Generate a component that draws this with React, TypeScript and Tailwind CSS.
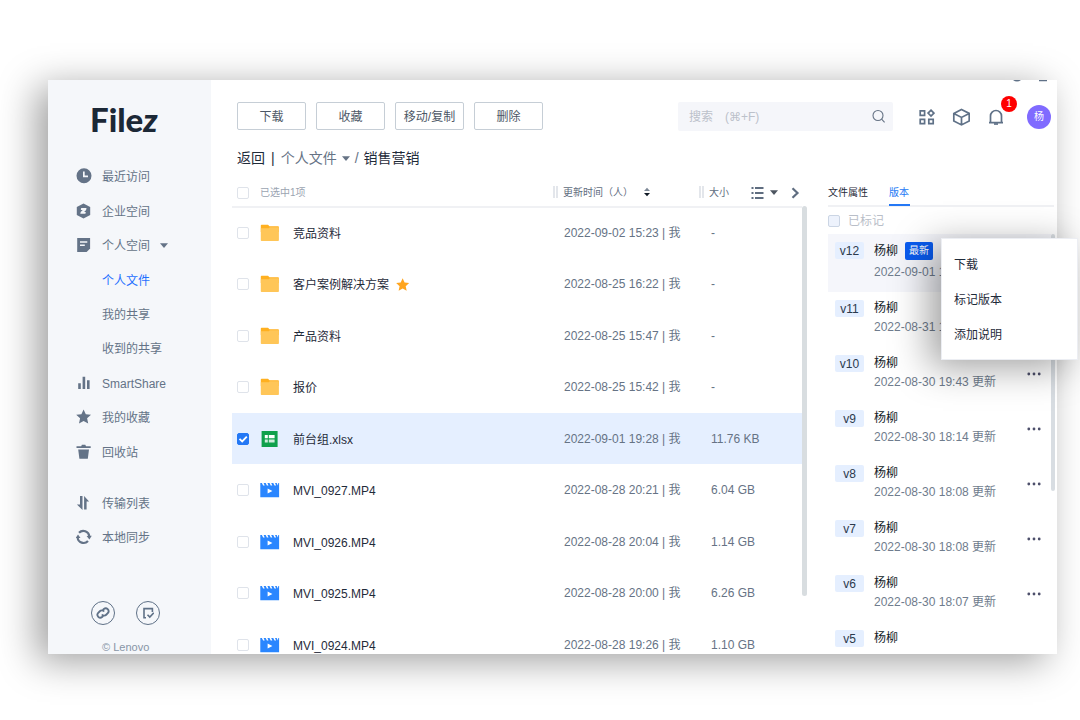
import { clsx } from "clsx";
import type { ReactNode } from "react";

type FileKind = "folder" | "sheet" | "video";

type FileItem = {
  kind: FileKind;
  name: string;
  selected?: boolean;
  size: string;
  starred?: boolean;
  updatedAt: string;
};

type Version = {
  id: string;
  updatedAt?: string;
};

const files: FileItem[] = [
  { kind: "folder", name: "竞品资料", updatedAt: "2022-09-02 15:23", size: "-" },
  { kind: "folder", name: "客户案例解决方案", updatedAt: "2022-08-25 16:22", size: "-", starred: true },
  { kind: "folder", name: "产品资料", updatedAt: "2022-08-25 15:47", size: "-" },
  { kind: "folder", name: "报价", updatedAt: "2022-08-25 15:42", size: "-" },
  { kind: "sheet", name: "前台组.xlsx", updatedAt: "2022-09-01 19:28", size: "11.76 KB", selected: true },
  { kind: "video", name: "MVI_0927.MP4", updatedAt: "2022-08-28 20:21", size: "6.04 GB" },
  { kind: "video", name: "MVI_0926.MP4", updatedAt: "2022-08-28 20:04", size: "1.14 GB" },
  { kind: "video", name: "MVI_0925.MP4", updatedAt: "2022-08-28 20:00", size: "6.26 GB" },
  { kind: "video", name: "MVI_0924.MP4", updatedAt: "2022-08-28 19:26", size: "1.10 GB" },
];

const versions: Version[] = [
  { id: "v12", updatedAt: "2022-09-01 19:28" },
  { id: "v11", updatedAt: "2022-08-31 19:43" },
  { id: "v10", updatedAt: "2022-08-30 19:43" },
  { id: "v9", updatedAt: "2022-08-30 18:14" },
  { id: "v8", updatedAt: "2022-08-30 18:08" },
  { id: "v7", updatedAt: "2022-08-30 18:08" },
  { id: "v6", updatedAt: "2022-08-30 18:07" },
  { id: "v5" },
];

function Icon({ children, className }: { children: ReactNode; className?: string }) {
  return (
    <svg viewBox="0 0 16 16" fill="currentColor" aria-hidden="true" className={clsx("shrink-0", className ?? "size-4")}>
      {children}
    </svg>
  );
}

function Caret({ className }: { className?: string }) {
  return (
    <svg viewBox="0 0 8 5" fill="currentColor" aria-hidden="true" className={clsx("h-[5px] w-2 shrink-0", className)}>
      <path d="M0 .3h8L4 4.900z" />
    </svg>
  );
}

const clockIcon = (
  <Icon>
    <path fillRule="evenodd" d="M8 .3a7.5 7.5 0 1 0 0 15 7.5 7.5 0 0 0 0-15ZM7 3.5h1.7v4H12v1.7H7z" />
  </Icon>
);

const companyIcon = (
  <Icon>
    <path d="m7.5.4 6.7 3.7v7.8l-6.7 3.7L.8 11.9V4.1z" />
    <path d="M5.200 5h5.300l-.4 1.900-2 2h1.700l-.4 1.900H4.300l.4-1.900 2-2H4.800z" fill="#f5f7fa" />
  </Icon>
);

const personalIcon = (
  <Icon>
    <path d="M1.200 1h12.900v10.500L10.600 14.900H1.200z" />
    <path d="M4 4.200h7.300v1.500H4zM4 7.400h4.800v1.500H4z" fill="#f5f7fa" />
  </Icon>
);

const shareIcon = (
  <Icon>
    <path d="M2.200 8.300h2.600V14H2.200zM6.600 1.800h2.600V14H6.600zM11 5.200h2.600V14H11z" />
  </Icon>
);

const starPath = "m7.6.4 2.200 4.800 5.200.6-3.900 3.500 1.100 5.200-4.600-2.600-4.600 2.600L4.100 9.300.2 5.800l5.200-.6z";

const trashIcon = (
  <Icon>
    <path d="M.5 2.200h4.700L5.900.8h3.400l.7 1.400h4.700v1.900H.5zM2.200 5.400h10.800l-1.200 9.400H3.400z" />
  </Icon>
);

const transferIcon = (
  <Icon>
    <path d="M4 1h2.500v14L.9 9.500H4zM8.100 1l5 5.500h-2.500V14.500H8.100z" />
  </Icon>
);

const syncIcon = (
  <Icon>
    <g fill="none" stroke="currentColor" strokeWidth="2.200">
      <path d="M3 3.700a6 6 0 0 1 10.300 3.600" />
      <path d="M12 12a6 6 0 0 1-10.400-3.500" />
    </g>
    <path d="m10.600 7 5.200-.3-2.400 3.800zM4.500 8.900l-4.800.2 2.300-3.700z" />
  </Icon>
);

type NavEntry = { active?: boolean; expandable?: boolean; icon?: ReactNode; label: string };

const primaryNav: NavEntry[] = [
  { label: "最近访问", icon: clockIcon },
  { label: "企业空间", icon: companyIcon },
  { label: "个人空间", icon: personalIcon, expandable: true },
  { label: "个人文件", active: true },
  { label: "我的共享" },
  { label: "收到的共享" },
  { label: "SmartShare", icon: shareIcon },
  { label: "我的收藏", icon: <Icon><path d={starPath} /></Icon> },
  { label: "回收站", icon: trashIcon },
];

const secondaryNav: NavEntry[] = [
  { label: "传输列表", icon: transferIcon },
  { label: "本地同步", icon: syncIcon },
];

function NavLink({ active, expandable, icon, label }: NavEntry) {
  return (
    <a
      href="#"
      className={clsx("flex items-center gap-2.5", active ? "text-[#1f6fff]" : "text-[#647387]")}
    >
      {icon ?? <span className="w-4" />}
      <span className="pt-0.5">{label}</span>
      {expandable ? <Caret /> : null}
    </a>
  );
}

function Sidebar() {
  return (
    <aside className="flex w-[163px] shrink-0 flex-col overflow-hidden bg-[#f5f7fa]">
      <div className="mt-[19px] ml-[42px] h-10 font-['Lato',sans-serif] text-[33px] leading-10 font-black text-[#1c2836]">
        File<span className="italic">z</span>
      </div>
      <nav className="mt-5 pl-7">
        <div className="grid h-[310px] auto-rows-fr">
          {primaryNav.map((entry) => (
            <NavLink key={entry.label} {...entry} />
          ))}
        </div>
        <div className="mt-[17px] grid h-[68px] auto-rows-fr">
          {secondaryNav.map((entry) => (
            <NavLink key={entry.label} {...entry} />
          ))}
        </div>
      </nav>
      <div className="mt-[47px] ml-[43px] flex gap-[21px] text-[#5f7187]">
        <button type="button" aria-label="链接" className="grid size-6 place-items-center rounded-full border border-current">
          <svg viewBox="0 0 24 24" fill="none" stroke="currentColor" strokeWidth="3.200" className="size-3.5">
            <path d="M10 14.500a5 5 0 0 0 7.500.5l3-3a5 5 0 0 0-7-7l-2 2" />
            <path d="M14 9.500a5 5 0 0 0-7.500-.5l-3 3a5 5 0 0 0 7 7l2-2" />
          </svg>
        </button>
        <button type="button" aria-label="任务" className="grid size-6 place-items-center rounded-full border border-current">
          <svg viewBox="0 0 12 12" fill="none" stroke="currentColor" strokeWidth="1.600" className="size-3">
            <path d="M4 10.800H2V1.600h8.400V5" />
            <path d="m5.500 7.700 2.300 2.400 4-4.200" />
          </svg>
        </button>
      </div>
      <p className="mt-3.5 ml-[54px] text-[11px] leading-4 whitespace-nowrap text-[#8795a6]">© Lenovo</p>
    </aside>
  );
}

function Checkbox({ checked, label, muted }: { checked?: boolean; label: string; muted?: boolean }) {
  return (
    <span className="relative block size-3 shrink-0">
      <input
        type="checkbox"
        aria-label={label}
        defaultChecked={checked}
        className={clsx(
          "peer block size-3 appearance-none rounded-[2px] border checked:border-[#2478f5] checked:bg-[#2478f5]",
          muted ? "border-[#cbd5e4] bg-[#edf2fc]" : "border-[#dfe3ea] bg-white",
        )}
      />
      <svg
        viewBox="0 0 12 12"
        fill="none"
        stroke="white"
        strokeWidth="1.800"
        className="pointer-events-none absolute inset-0 hidden size-3 peer-checked:block"
      >
        <path d="m2.500 5.800 2.700 2.600 4.600-4.800" />
      </svg>
    </span>
  );
}

function FileIcon({ kind }: { kind: FileKind }) {
  if (kind === "folder") {
    return (
      <svg viewBox="0 0 20 18" className="h-[18px] w-5 shrink-0" aria-hidden="true">
        <path d="M.8 1.500a.8.8 0 0 1 .8-.8h6.400L9.500 2.300h8.600a.8.800 0 0 1 .8.8V8H.8z" fill="#ffb020" />
        <path d="M.8 4.200h8l1-1h9.100v13a.8.800 0 0 1-.8.8H1.600a.8.800 0 0 1-.8-.8z" fill="#ffc658" />
      </svg>
    );
  }
  if (kind === "sheet") {
    return (
      <svg viewBox="0 0 20 18" className="h-[18px] w-5 shrink-0" aria-hidden="true">
        <path d="M1.600 1h16v16h-16z" fill="#0fa04c" />
        <path d="M4.800 5h3v3.200h-3zM8.800 5h5.800v3.200H8.800z" fill="#fff" />
        <path d="M4.800 9.400h3v3.200h-3zM8.800 9.400h5.800v3.200H8.800z" fill="#cfecdb" />
      </svg>
    );
  }
  return (
    <svg viewBox="0 0 20 18" className="h-[18px] w-5 shrink-0" aria-hidden="true">
      <path
        d="M.3 2h1.600l1.200 2.400h1.600L3.600 2h2.100l1.200 2.400h1.600L7.400 2h2.100l1.200 2.400h1.600L11.200 2h2.100l1.200 2.400h1.600L15 2h1.700l1.200 2.400.4-2.400h.8v14.200H.3z"
        fill="#2a86ff"
      />
      <path d="m7.600 7.400 4.800 2.600-4.800 2.600z" fill="#fff" />
    </svg>
  );
}

function ToolbarButton({ children }: { children: ReactNode }) {
  return (
    <button
      type="button"
      className="h-7 w-[69px] rounded-[2px] border border-[#c6ced6] bg-white pt-0.5 text-xs text-[#4d5766]"
    >
      {children}
    </button>
  );
}

function Header() {
  return (
    <header className="flex h-[29px] items-center pr-1.5 pl-[26px]">
      <div className="flex gap-2.5 self-start">
        <ToolbarButton>下载</ToolbarButton>
        <ToolbarButton>收藏</ToolbarButton>
        <ToolbarButton>移动/复制</ToolbarButton>
        <ToolbarButton>删除</ToolbarButton>
      </div>
      <label className="ml-auto flex h-[29px] w-[215px] items-center rounded-[2px] bg-[#f5f6fa] pr-1.5 pl-[11px]">
        <input
          type="text"
          aria-label="搜索"
          placeholder="搜索　(⌘+F)"
          className="min-w-0 flex-1 bg-transparent font-['Liberation_Sans','DejaVu_Sans','Noto_Sans_CJK_SC',sans-serif] text-xs outline-none placeholder:text-[#bcc1ca]"
        />
        <Icon className="size-4 text-[#667385]">
          <g fill="none" stroke="currentColor" strokeWidth="1.100">
            <circle cx="7" cy="6.500" r="5" />
            <path d="m10.600 10.100 3 3.200" />
          </g>
        </Icon>
      </label>
      <div className="ml-[26px] flex items-center gap-[17px] text-[#5f7187]">
        <button type="button" aria-label="应用">
          <Icon>
            <g fill="none" stroke="currentColor" strokeWidth="1.700">
              <path d="M1.200 1.900h4.400v4.400H1.200zM1.200 10.300h4.400v4.400H1.200zM9.800 10.300h4.400v4.400H9.800zM12 1.200l2.900 2.900L12 7 9.100 4.100z" />
            </g>
          </Icon>
        </button>
        <button type="button" aria-label="产品">
          <svg viewBox="0 0 18 18" fill="none" stroke="currentColor" strokeWidth="1.700" className="size-[18px]">
            <path d="m9.500 1.500 7.700 3.900v7.600l-7.700 3.900L1.800 13V5.400zM1.800 5.400l7.700 4 7.700-4M9.500 9.400v7.500" />
          </svg>
        </button>
        <button type="button" aria-label="通知" className="relative">
          <svg viewBox="0 0 18 18" fill="none" stroke="currentColor" strokeWidth="1.700" className="size-[18px]">
            <path d="M3.500 14.200V8a5.500 5.500 0 0 1 11 0v6.200M2 14.600h14" />
            <path d="M7 16h4" />
          </svg>
          <span className="absolute -top-3 left-3.5 grid size-4 place-items-center rounded-full bg-[#fe0000] text-[10px] leading-4 text-white">
            1
          </span>
        </button>
      </div>
      <button type="button" className="ml-[22px] size-6 rounded-full bg-[#806bff] text-[10px] text-white">
        杨
      </button>
    </header>
  );
}

function Grip() {
  return <span className="mr-[5px] h-3 w-[5px] shrink-0 border-x-2 border-[#e3e6eb]" />;
}

function FileTable() {
  return (
    <table className="min-w-0 flex-1 table-fixed border-collapse text-left">
      <colgroup>
        <col className="w-7" />
        <col />
        <col className="w-[146px]" />
        <col className="w-[52px]" />
        <col className="w-[51px]" />
      </colgroup>
      <thead className="text-[10px] text-[#5f6d80]">
        <tr className="h-7 border-b-2 border-[#f0f1f4]">
          <th className="pl-[5px] font-normal">
            <Checkbox label="全选" />
          </th>
          <th className="font-normal text-[#9ba4b1]">已选中1项</th>
          <th className="font-normal">
            <div className="flex items-center">
              <Grip />
              更新时间（人）
              <svg viewBox="0 0 8 10" className="ml-2.5 h-2.5 w-2" aria-hidden="true">
                <path d="M1 4h6L4 .8z" fill="#7d8896" />
                <path d="M1 6h6L4 9.200z" fill="#111a26" />
              </svg>
            </div>
          </th>
          <th className="font-normal">
            <div className="flex items-center">
              <Grip />
              大小
            </div>
          </th>
          <th>
            <div className="flex items-center">
              <button type="button" aria-label="视图" className="flex items-center gap-1.5">
                <svg viewBox="0 0 13 12" fill="currentColor" className="h-3 w-[13px]">
                  <path d="M.5 0h2v2h-2zM.5 5h2v2h-2zM.5 10h2v2h-2zM4 0h8.500v2H4zM4 5h8.500v2H4zM4 10h8.500v2H4z" />
                </svg>
                <Caret className="text-[#4d5560]" />
              </button>
              <button type="button" aria-label="收起详情" className="ml-3">
                <svg viewBox="0 0 10 12" fill="none" stroke="currentColor" strokeWidth="2.200" className="h-3 w-2.5">
                  <path d="m2.500 1.200 5 4.800-5 4.800" />
                </svg>
              </button>
            </div>
          </th>
        </tr>
      </thead>
      <tbody className="text-xs">
        {files.map((file) => (
          <tr key={file.name} className={clsx("odd:h-[51px] even:h-[52px]", file.selected && "bg-[#e5efff]")}>
            <td className="pl-[5px]">
              <Checkbox checked={file.selected} label={file.name} />
            </td>
            <td>
              <div className="flex items-center gap-[13px] text-[#1f2b3a]">
                <FileIcon kind={file.kind} />
                <span className="flex items-center gap-[7px] pt-0.5">
                  {file.name}
                  {file.starred ? (
                    <Icon className="size-3.5 text-[#ffa51f]">
                      <path d={starPath} />
                    </Icon>
                  ) : null}
                </span>
              </div>
            </td>
            <td className="pl-[11px] whitespace-nowrap text-[#667385]">{file.updatedAt} | 我</td>
            <td colSpan={2} className="pl-3 text-[#667385]">
              {file.size}
            </td>
          </tr>
        ))}
      </tbody>
    </table>
  );
}

function VersionRow({ latest, version }: { latest: boolean; version: Version }) {
  return (
    <li className={clsx("flex pl-[7px]", latest ? "h-[58px] bg-[#f5f6fb] pt-2" : "h-[55px] pt-[7px]")}>
      <span
        className={clsx(
          "h-[17px] w-[29px] rounded-[2px] bg-[#e5efff] text-center leading-[18px] text-[#2c3a4d]",
          latest ? "mt-0" : "mt-px",
        )}
      >
        {version.id}
      </span>
      <div className="ml-2.5 min-w-0 flex-1">
        <div className="flex h-[18px] items-center gap-[7px] text-[#111a26]">
          杨柳
          {latest ? (
            <span className="h-[18px] w-7 rounded-[2px] bg-[#0a5cf0] text-center text-[10px] leading-[18px] text-white">
              最新
            </span>
          ) : null}
        </div>
        {version.updatedAt ? (
          <div className={clsx("leading-5 whitespace-nowrap text-[#6f7c8d]", latest && "mt-0.5")}>
            {version.updatedAt} 更新
          </div>
        ) : null}
      </div>
      {version.updatedAt ? (
        <button type="button" aria-label="更多" className="mt-3.5 mr-2.5 h-3 w-3.5 text-[#4d4f6b]">
          <svg viewBox="0 0 14 12" fill="currentColor" className="h-3 w-3.5">
            <circle cx="1.800" cy="6" r="1.400" />
            <circle cx="7" cy="6" r="1.400" />
            <circle cx="12.200" cy="6" r="1.400" />
          </svg>
        </button>
      ) : null}
    </li>
  );
}

function VersionMenu() {
  return (
    <div
      role="menu"
      className="absolute top-1 -right-[21px] z-10 flex w-[137px] flex-col border border-[#eceef3] bg-white pt-2 pb-[7px] shadow-[-11px_7px_36px_rgba(0,0,0,0.38)]"
    >
      {["下载", "标记版本", "添加说明"].map((label) => (
        <button key={label} type="button" role="menuitem" className="h-[35px] pl-3 text-left text-[#1f2b3a]">
          {label}
        </button>
      ))}
    </div>
  );
}

function VersionPanel() {
  return (
    <section className="flex min-h-0 w-[229px] shrink-0 flex-col text-xs">
      <div role="tablist" className="mr-[3px] flex h-7 gap-5 border-b-2 border-[#f0f1f4] text-[10px]">
        <button type="button" role="tab" className="w-[41px] pt-0.5 text-left whitespace-nowrap text-[#1f2b3a]">
          文件属性
        </button>
        <button
          type="button"
          role="tab"
          aria-selected="true"
          className="h-[27px] w-[21px] border-b-2 border-[#2478f5] pt-0.5 text-left whitespace-nowrap text-[#2478f5]"
        >
          版本
        </button>
      </div>
      <div className="flex h-[27px] items-center gap-2 text-[#b9bec8]">
        <Checkbox label="已标记" muted />
        已标记
      </div>
      <div className="relative flex min-h-0 flex-1">
        <div className="flex min-w-0 flex-1 overflow-hidden">
          <ul className="min-w-0 flex-1">
            {versions.map((version, index) => (
              <VersionRow key={version.id} latest={index === 0} version={version} />
            ))}
          </ul>
          <div className="mr-0.5 h-[257px] w-1 shrink-0 rounded-full bg-[#d8dde2]" />
        </div>
        <VersionMenu />
      </div>
    </section>
  );
}

export default function App() {
  return (
    <div className="flex h-screen overflow-hidden bg-white pt-20 pr-[23px] pb-[66px] pl-12 font-['Liberation_Sans','Noto_Sans_CJK_SC',sans-serif] text-xs">
      <div className="relative flex min-w-0 flex-1 bg-white shadow-[-11px_7px_36px_rgba(0,0,0,0.38)]">
        <Sidebar />
        <div className="flex min-w-0 flex-1 flex-col pt-[22px]">
          <Header />
          <div className="mt-[15px] flex h-6 items-center pl-[26px] text-sm text-[#1f2b3a]">
            <a href="#">返回</a>
            <span className="mx-1.5">|</span>
            <a href="#" className="flex items-center gap-[5px] text-[#667385]">
              个人文件
              <Caret />
            </a>
            <span className="mx-[5px] text-[#667385]">/</span>
            <span>销售营销</span>
          </div>
          <div className="mt-[9px] flex min-h-0 flex-1">
            <main className="mr-[21px] flex min-w-0 flex-1 items-start self-stretch overflow-hidden pl-[21px]">
              <FileTable />
              <div className="mt-[27px] h-[390px] w-[5px] shrink-0 rounded-full bg-[#d8dde0]" />
            </main>
            <VersionPanel />
          </div>
        </div>
        <svg
          viewBox="0 0 34 2"
          fill="#5f7187"
          aria-hidden="true"
          className="pointer-events-none absolute top-0 right-2.5 h-0.5 w-[34px]"
        >
          <path d="M0 0h8Q4 3 0 0zM26 0h8v1.200h-8z" />
        </svg>
      </div>
    </div>
  );
}
